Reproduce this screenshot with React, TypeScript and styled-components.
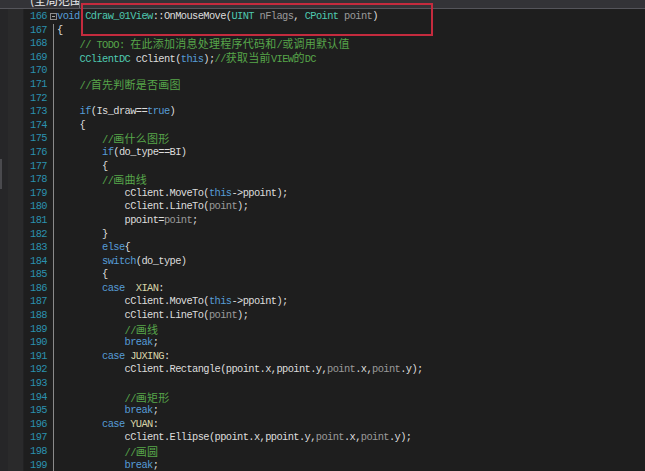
import React from "react";
import styled, { createGlobalStyle } from "styled-components";

type Kind = "kw" | "cm" | "ty" | "pm" | "mc" | "tx";
type Tok = [Kind, string];
type Line = { no: number; indent: number; toks: Tok[]; fold?: boolean };

const colors: Record<Kind, string> = {
  kw: "#569cd6",
  cm: "#57a64a",
  ty: "#4ec9b0",
  pm: "#9a9a9a",
  mc: "#d8d4a8",
  tx: "#dcdcdc",
};

const GlobalStyle = createGlobalStyle`
  html, body {
    margin: 0;
    padding: 0;
    background: #1e1e1e;
  }
`;

const Page = styled.div`
  position: relative;
  width: 645px;
  height: 471px;
  overflow: hidden;
  background: #1e1e1e;
  display: flex;
  flex-direction: column;
`;

const TopBar = styled.div`
  height: 8px;
  flex: none;
  display: flex;
  background: #333337;
  border-bottom: 1px solid #55555b;
  overflow: hidden;
`;

const ScopeBox = styled.div`
  width: 55px;
  margin-left: 24px;
  border-right: 1px solid #6a6a70;
  overflow: hidden;
`;

const ScopeLabel = styled.div`
  margin-top: -8px;
  padding-left: 6px;
  font: 12px/16px "Noto Sans CJK SC", "Noto Sans", sans-serif;
  color: #e8e8e8;
  white-space: nowrap;
`;

const Editor = styled.div`
  flex: 1;
  display: flex;
  padding-top: 1px;
  background: #1e1e1e;
`;

const SideStrip = styled.div`
  width: 24px;
  flex: none;
  display: flex;
  margin-top: -1px;
`;

const SideEdge = styled.div`
  width: 8px;
  background: #262628;
  padding-top: 150px;
`;

const SideThumb = styled.div`
  width: 2px;
  height: 30px;
  background: #4a4a4e;
`;

const SideInner = styled.div`
  flex: 1;
  background: #2a2a2b;
  border-right: 1px solid #222223;
`;

const Lines = styled.div`
  flex: 1;
  display: flex;
  flex-direction: column;
`;

const Row = styled.div`
  height: 13.6px;
  display: flex;
  align-items: stretch;
  font-family: "Liberation Mono", "Noto Sans CJK SC", monospace;
  font-size: 10.4px;
  line-height: 13.6px;
  letter-spacing: -0.61px;
`;

const LineNo = styled.div`
  width: 23px;
  text-align: right;
  color: #2b91af;
  flex: none;
`;

const FoldCell = styled.div<{ $box?: boolean }>`
  width: 10px;
  flex: none;
  display: flex;
  justify-content: flex-start;
  padding-left: ${({ $box }) => ($box ? 3 : 6)}px;
  box-sizing: border-box;
`;

const FoldBox = styled.div`
  margin-top: 3px;
  width: 7px;
  height: 7px;
  box-sizing: border-box;
  border: 1px solid #8a8a8a;
  display: flex;
  align-items: center;
  justify-content: center;
  &::after {
    content: "";
    width: 3px;
    height: 1px;
    background: #a5a5a5;
  }
`;

const FoldLine = styled.div`
  width: 1px;
  background: #8a8a8a;
`;

const Code = styled.div`
  white-space: pre;
  color: #dcdcdc;
`;

const Tk = styled.span<{ $kind: Kind }>`
  color: ${({ $kind }) => colors[$kind]};
`;

const Cjk = styled.span`
  font-family: "Noto Sans CJK SC", sans-serif;
  font-size: 11px;
  letter-spacing: 0.26px;
`;

const Highlight = styled.div`
  position: absolute;
  left: 81px;
  top: 3px;
  width: 352px;
  height: 33px;
  border: 2px solid #c42b3e;
  box-sizing: border-box;
  pointer-events: none;
`;

const t = (k: Kind, s: string): Tok => [k, s];

const lines: Line[] = [
  {
    no: 166,
    indent: 0,
    fold: true,
    toks: [
      t("kw", "void"), t("tx", " "), t("ty", "Cdraw_01View"), t("tx", "::OnMouseMove("),
      t("ty", "UINT"), t("tx", " "), t("pm", "nFlags"), t("tx", ", "), t("ty", "CPoint"),
      t("tx", " "), t("pm", "point"), t("tx", ")"),
    ],
  },
  { no: 167, indent: 0, toks: [t("tx", "{")] },
  { no: 168, indent: 1, toks: [t("cm", "// TODO: 在此添加消息处理程序代码和/或调用默认值")] },
  {
    no: 169,
    indent: 1,
    toks: [t("ty", "CClientDC"), t("tx", " cClient("), t("kw", "this"), t("tx", ");"), t("cm", "//获取当前VIEW的DC")],
  },
  { no: 170, indent: 0, toks: [] },
  { no: 171, indent: 1, toks: [t("cm", "//首先判断是否画图")] },
  { no: 172, indent: 0, toks: [] },
  { no: 173, indent: 1, toks: [t("kw", "if"), t("tx", "(Is_draw=="), t("kw", "true"), t("tx", ")")] },
  { no: 174, indent: 1, toks: [t("tx", "{")] },
  { no: 175, indent: 2, toks: [t("cm", "//画什么图形")] },
  { no: 176, indent: 2, toks: [t("kw", "if"), t("tx", "(do_type==BI)")] },
  { no: 177, indent: 2, toks: [t("tx", "{")] },
  { no: 178, indent: 2, toks: [t("cm", "//画曲线")] },
  { no: 179, indent: 3, toks: [t("tx", "cClient.MoveTo("), t("kw", "this"), t("tx", "->ppoint);")] },
  { no: 180, indent: 3, toks: [t("tx", "cClient.LineTo("), t("pm", "point"), t("tx", ");")] },
  { no: 181, indent: 3, toks: [t("tx", "ppoint="), t("pm", "point"), t("tx", ";")] },
  { no: 182, indent: 2, toks: [t("tx", "}")] },
  { no: 183, indent: 2, toks: [t("kw", "else"), t("tx", "{")] },
  { no: 184, indent: 2, toks: [t("kw", "switch"), t("tx", "(do_type)")] },
  { no: 185, indent: 2, toks: [t("tx", "{")] },
  { no: 186, indent: 2, toks: [t("kw", "case"), t("tx", "  "), t("mc", "XIAN"), t("tx", ":")] },
  { no: 187, indent: 3, toks: [t("tx", "cClient.MoveTo("), t("kw", "this"), t("tx", "->ppoint);")] },
  { no: 188, indent: 3, toks: [t("tx", "cClient.LineTo("), t("pm", "point"), t("tx", ");")] },
  { no: 189, indent: 3, toks: [t("cm", "//画线")] },
  { no: 190, indent: 3, toks: [t("kw", "break"), t("tx", ";")] },
  { no: 191, indent: 2, toks: [t("kw", "case"), t("tx", " "), t("mc", "JUXING"), t("tx", ":")] },
  {
    no: 192,
    indent: 3,
    toks: [
      t("tx", "cClient.Rectangle(ppoint.x,ppoint.y,"), t("pm", "point"), t("tx", ".x,"),
      t("pm", "point"), t("tx", ".y);"),
    ],
  },
  { no: 193, indent: 0, toks: [] },
  { no: 194, indent: 3, toks: [t("cm", "//画矩形")] },
  { no: 195, indent: 3, toks: [t("kw", "break"), t("tx", ";")] },
  { no: 196, indent: 2, toks: [t("kw", "case"), t("tx", " "), t("mc", "YUAN"), t("tx", ":")] },
  {
    no: 197,
    indent: 3,
    toks: [
      t("tx", "cClient.Ellipse(ppoint.x,ppoint.y,"), t("pm", "point"), t("tx", ".x,"),
      t("pm", "point"), t("tx", ".y);"),
    ],
  },
  { no: 198, indent: 3, toks: [t("cm", "//画圆")] },
  { no: 199, indent: 3, toks: [t("kw", "break"), t("tx", ";")] },
];

// split runs so CJK glyphs get a two-column advance
const withCjk = (s: string) =>
  s.split(/([\u3000-\u9fff\uff00-\uffef]+)/).map((part, i) =>
    /[\u3000-\u9fff\uff00-\uffef]/.test(part) ? <Cjk key={i}>{part}</Cjk> : part
  );

const CodeLine: React.FC<{ line: Line }> = ({ line }) => (
  <Row>
    <LineNo>{line.no}</LineNo>
    <FoldCell $box={line.fold}>{line.fold ? <FoldBox /> : <FoldLine />}</FoldCell>
    <Code>
      {"    ".repeat(line.indent)}
      {line.toks.map(([k, s], i) => (
        <Tk key={i} $kind={k}>
          {withCjk(s)}
        </Tk>
      ))}
    </Code>
  </Row>
);

export default function App() {
  return (
    <Page>
      <GlobalStyle />
      <TopBar>
        <ScopeBox>
          <ScopeLabel>(全局范围)</ScopeLabel>
        </ScopeBox>
      </TopBar>
      <Editor>
        <SideStrip>
          <SideEdge>
            <SideThumb />
          </SideEdge>
          <SideInner />
        </SideStrip>
        <Lines>
          {lines.map((l) => (
            <CodeLine key={l.no} line={l} />
          ))}
        </Lines>
      </Editor>
      <Highlight />
    </Page>
  );
}
